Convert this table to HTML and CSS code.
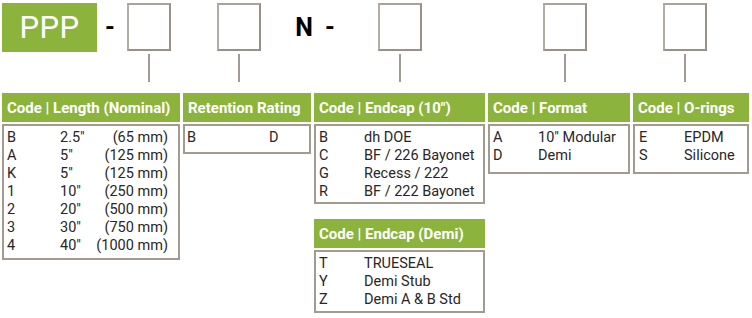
FILE: index.html
```html
<!DOCTYPE html>
<html>
<head>
<meta charset="utf-8">
<link rel="stylesheet" href="styles.css">
</head>
<body>
<div class="page">
  <div class="top">
    <div class="ppp">PPP</div>
    <div class="sym dash1">-</div>
    <div class="unit u1"><div class="box"></div><div class="stem"></div></div>
    <div class="unit u2"><div class="box"></div><div class="stem"></div></div>
    <div class="sym nletter">N</div>
    <div class="sym dash2">-</div>
    <div class="unit u3"><div class="box"></div><div class="stem"></div></div>
    <div class="unit u4"><div class="box"></div><div class="stem"></div></div>
    <div class="unit u5"><div class="box"></div><div class="stem"></div></div>
  </div>
  <div class="tables">
    <div class="col c1">
      <div class="head">Code | Length (Nominal)</div>
      <div class="body len">
        <span>B</span><span>2.5″</span><span class="r">(65 mm)</span>
        <span>A</span><span>5″</span><span class="r">(125 mm)</span>
        <span>K</span><span>5″</span><span class="r">(125 mm)</span>
        <span>1</span><span>10″</span><span class="r">(250 mm)</span>
        <span>2</span><span>20″</span><span class="r">(500 mm)</span>
        <span>3</span><span>30″</span><span class="r">(750 mm)</span>
        <span>4</span><span>40″</span><span class="r">(1000 mm)</span>
      </div>
    </div>
    <div class="col c2">
      <div class="head">Retention Rating</div>
      <div class="body ret">
        <span>B</span><span>D</span>
      </div>
    </div>
    <div class="col c3">
      <div class="head">Code | Endcap (10″)</div>
      <div class="body pair h80">
        <span>B</span><span>dh DOE</span>
        <span>C</span><span>BF / 226 Bayonet</span>
        <span>G</span><span>Recess / 222</span>
        <span>R</span><span>BF / 222 Bayonet</span>
      </div>
      <div class="head second">Code | Endcap (Demi)</div>
      <div class="body pair h63">
        <span>T</span><span>TRUESEAL</span>
        <span>Y</span><span>Demi Stub</span>
        <span>Z</span><span>Demi A &amp; B Std</span>
      </div>
    </div>
    <div class="col c4">
      <div class="head">Code | Format</div>
      <div class="body pair h50">
        <span>A</span><span>10″ Modular</span>
        <span>D</span><span>Demi</span>
      </div>
    </div>
    <div class="col c5">
      <div class="head">Code | O-rings</div>
      <div class="body pair h50 wide">
        <span>E</span><span>EPDM</span>
        <span>S</span><span>Silicone</span>
      </div>
    </div>
  </div>
</div>
</body>
</html>
```
FILE: styles.css
```css
* { box-sizing: border-box; }
html, body { margin: 0; padding: 0; background: #fff; }
body {
  font-family: Roboto, "Liberation Sans", sans-serif;
  color: #2a2627;
  width: 752px;
  height: 318px;
  overflow: hidden;
}
.page { padding: 3px 0 0 2px; }

.top {
  display: flex;
  align-items: flex-start;
  height: 90px;
}
.ppp {
  width: 95px;
  height: 49px;
  background: #8cb43c;
  color: #fff;
  font-size: 31px;
  display: flex;
  align-items: center;
  justify-content: center;
  letter-spacing: 0.5px;
}
.sym {
  height: 49px;
  display: flex;
  align-items: center;
  justify-content: center;
  font-weight: 700;
  color: #000;
  font-size: 25px;
}
.dash1 { width: 20px; margin-left: 3px; }
.nletter { width: 28px; margin-left: 29px; }
.dash2 { width: 20px; margin-left: 2px; }

.unit {
  width: 44px;
  display: flex;
  flex-direction: column;
  align-items: center;
}
.u1 { margin-left: 7px; }
.u2 { margin-left: 46px; }
.u3 { margin-left: 38px; }
.u4 { margin-left: 121px; }
.u5 { margin-left: 76px; }
.box {
  width: 44px;
  height: 48px;
  border: 2px solid #9a9088;
  border-left-color: #b4aca4;
  border-top-color: #aaa299;
}
.stem {
  width: 2px;
  height: 28px;
  margin-top: 3px;
  background: #a39b93;
}

.tables {
  display: flex;
  gap: 3px;
  align-items: flex-start;
}
.col { display: flex; flex-direction: column; }
.c1 { width: 178px; }
.c2 { width: 128px; }
.c3 { width: 171px; }
.c4 { width: 142px; }
.c5 { width: 116px; }

.head {
  height: 29px;
  background: #8cb43c;
  color: #fff;
  font-weight: 700;
  font-size: 15px;
  display: flex;
  align-items: center;
  padding-left: 5px;
  white-space: nowrap;
}
.head.second { margin-top: 15px; }

.body {
  margin-top: 2px;
  border: 2px solid #a39a90;
  padding: 3px 3px 3px 3px;
  font-size: 14.5px;
  line-height: 18px;
  display: grid;
  align-content: start;
  white-space: nowrap;
}
.len {
  grid-template-columns: 53px 1fr auto;
  padding-right: 10px;
  height: 136px;
}
.len .r { text-align: right; }
.ret {
  grid-template-columns: 82px 1fr;
  padding-left: 2px;
  height: 30px;
}
.pair { grid-template-columns: 45px 1fr; }
.pair.wide { padding-left: 4px; }
.h80 { height: 80px; }
.h63 { height: 63px; }
.h50 { height: 50px; }
```
